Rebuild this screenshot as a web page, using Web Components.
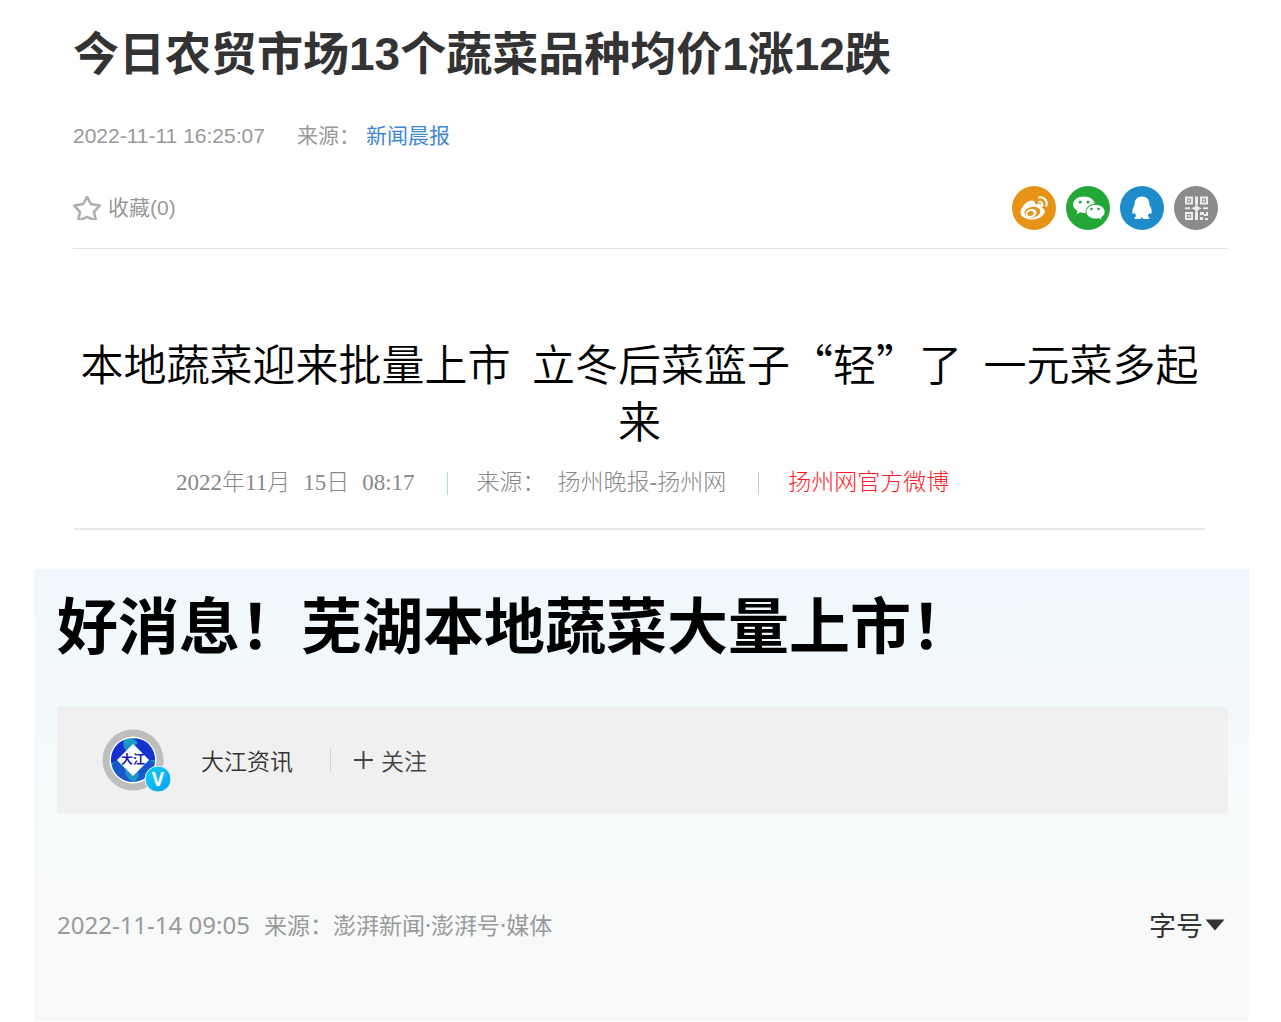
<!DOCTYPE html>
<html lang="zh-CN">
<head>
<meta charset="utf-8">
<meta name="viewport" content="width=device-width, initial-scale=1">
<title>蔬菜新闻</title>
<style>
body { margin: 0; background: #fff; font-family: "Liberation Sans", "Noto Sans CJK SC", sans-serif; }
</style>
</head>
<body>
<news-page>
  <price-article>
    <span slot="title">今日农贸市场13个蔬菜品种均价1涨12跌</span>
    <span slot="time">2022-11-11 16:25:07</span>
    <a slot="source" href="#source">新闻晨报</a>
  </price-article>
  <market-article>
    <span slot="title">本地蔬菜迎来批量上市&ensp;立冬后菜篮子“轻”了&ensp;一元菜多起来</span>
  </market-article>
  <wuhu-article>
    <span slot="title">好消息！芜湖本地蔬菜大量上市！</span>
    <author-bar slot="author" name="大江资讯"></author-bar>
  </wuhu-article>
</news-page>

<script>
const define = (name, html) => customElements.define(name, class extends HTMLElement {
  constructor() {
    super();
    this.attachShadow({ mode: 'open' }).innerHTML = html;
  }
  connectedCallback() {
    const label = this.shadowRoot.querySelector('[data-name]');
    if (label) label.textContent = this.getAttribute('name');
  }
});

define('news-page', `
<style>
  :host { display: block; }
  main { display: flex; flex-direction: column; }
</style>
<main><slot></slot></main>`);

define('favourite-button', `
<style>
  :host { display: block; }
  button { display: flex; align-items: center; gap: 6px; padding: 0; border: 0; background: none; color: #999; font: inherit; line-height: 30px; cursor: pointer; }
  svg { display: block; }
</style>
<button type="button">
  <svg width="29" height="24" viewBox="0 0 29 24" aria-hidden="true"><path d="M14 0.8 L17.8 8 L26.8 9.6 L21 15.8 L22.8 24.600 L14 21 L5.2 24.600 L7 15.800 L1.2 9.600 L10.2 8 Z" fill="none" stroke="#b0b0b0" stroke-width="2.600" stroke-linejoin="round"/></svg>
  <span>收藏(0)</span>
</button>`);

define('share-bar', `
<style>
  :host { display: flex; gap: 10px; }
  button { padding: 0; border: 0; background: none; cursor: pointer; }
  svg { display: block; }
</style>
<button type="button" aria-label="微博"><svg width="44" height="44" viewBox="0 0 44 44">
  <circle cx="22" cy="22" r="22" fill="#e79315"/>
  <path d="M8.5 27 C8.5 21 15 14.500 20 14.500 C23 14.500 23.500 17 22.800 18.500 C27 17 31 18 30 22 C33.500 23 33.500 26 31.500 28.500 C28 33 21 34.500 15.500 33 C11 31.600 8.500 29.500 8.500 27Z" fill="#fff"/>
  <ellipse cx="20.500" cy="26.200" rx="8" ry="5.300" fill="#e79315" transform="rotate(-8 20 26.500)"/>
  <ellipse cx="19" cy="27.200" rx="5.600" ry="4.200" fill="#fff" transform="rotate(-15 19 27)"/>
  <ellipse cx="18.500" cy="27.500" rx="3.200" ry="2.300" fill="#e79315" transform="rotate(-15 18.500 27.500)"/>
  <path d="M27 11.500 C32 10.500 36 15 34.300 20 M27 15.800 C29.500 15.300 31.200 17.500 30.300 20" fill="none" stroke="#fff" stroke-width="2" stroke-linecap="round"/>
</svg></button>
<button type="button" aria-label="微信"><svg width="44" height="44" viewBox="0 0 44 44">
  <circle cx="22" cy="22" r="22" fill="#23a837"/>
  <path d="M18 10.500 C24 10.500 28.500 14 28.800 18.200 C23 18 19.500 21.500 20.500 26.800 C18.500 27.300 16 27 14 26.300 L10.500 28.300 L11.500 25 C8.500 23 7 21 7 18.800 C7 14 12 10.500 18 10.500Z" fill="#fff"/>
  <path d="M29.500 18.500 C34.500 18.500 39 21.500 39 26 C39 28.300 37.700 30 35.400 31.500 L36 34 L32.800 32.600 C27 34 20 31 20 26 C20 21.500 24.500 18.500 29.500 18.500Z" fill="#fff" stroke="#23a837" stroke-width="0.800"/>
  <g fill="#23a837"><circle cx="14.200" cy="16" r="1.600"/><circle cx="22" cy="16" r="1.600"/><circle cx="25.500" cy="23" r="1.300"/><circle cx="32.500" cy="23" r="1.300"/></g>
</svg></button>
<button type="button" aria-label="QQ"><svg width="44" height="44" viewBox="0 0 44 44">
  <circle cx="22" cy="22" r="22" fill="#1e8bcd"/>
  <path d="M22 10.500 C27.500 10.500 29.500 14.500 29.500 19 C31.500 22.500 32.300 25.500 31.300 27.800 C30.700 28.200 30 27.500 29.300 26.800 C29 28.300 28.200 29.300 27.500 30 C30 31 30 33 28 33 L23.500 33 C22.800 32.500 22.500 31.800 22 31 C21.500 31.800 21.200 32.500 20.500 33 L16 33 C14 33 14 31 16.500 30 C15.800 29.300 15 28.300 14.700 26.800 C14 27.500 13.300 28.200 12.700 27.800 C11.700 25.500 12.500 22.500 14.500 19 C14.500 14.500 16.500 10.500 22 10.500Z" fill="#fff"/>
</svg></button>
<button type="button" aria-label="二维码"><svg width="44" height="44" viewBox="0 0 44 44">
  <circle cx="22" cy="22" r="22" fill="#8b8b8b"/>
  <g fill="none" stroke="#ececec" stroke-width="2"><path d="M12 11.500h6v6h-6z M27 11.500h6v6h-6z M12 27h6v6h-6z"/></g>
  <g fill="#ececec"><path d="M14 13.500h2v2h-2z M29 13.500h2v2h-2z M14 29h2v2h-2z M21 10.500h3v8h-3z M21 26h3v8h-3z M11 21.300h5v2h-5z M29 21.300h5v2h-5z M22.500 17l1.600 3.700l3.700 1.600l-3.700 1.600l-1.600 3.700l-1.600-3.700l-3.700-1.600l3.700-1.600z M26 26h4v3h-4z M32 26h2v4h-4v-2h2z M26 31h3v3h-3z M31 32h3v2h-3z"/></g>
</svg></button>`);

define('price-article', `
<style>
  :host { display: block; padding: 24px 53px 0 73px; font-size: 21px; color: #999; }
  h1 { margin: 0 0 37px; font-size: 46px; line-height: 60px; font-weight: 700; color: #333; }
  .meta { display: flex; flex-wrap: wrap; gap: 6px; line-height: 30px; margin-bottom: 35px; }
  .time { margin-right: 26px; }
  ::slotted(a) { color: #3c87d6; text-decoration: none; }
  .actions { display: flex; justify-content: space-between; align-items: center; padding: 0 10px 18px 0; border-bottom: 1px solid #e2e2e2; }
</style>
<article>
  <h1><slot name="title"></slot></h1>
  <div class="meta"><span class="time"><slot name="time"></slot></span><span>来源：</span><slot name="source"></slot></div>
  <div class="actions"><favourite-button></favourite-button><share-bar></share-bar></div>
</article>`);

define('market-article', `
<style>
  :host { display: block; padding: 85px 76px 0 74px; }
  h2 { margin: 0 0 20px; text-align: center; font: 350 43px/57px "Noto Sans CJK SC", sans-serif; color: #000; }
  .meta { display: flex; flex-wrap: wrap; align-items: center; padding: 0 0 30px 102px; border-bottom: 2px solid #e8e8e8; font: 300 23px/30px "Liberation Serif", "Noto Sans CJK SC", serif; color: #888; }
  .date { display: flex; gap: 13px; }
  i { width: 1px; height: 23px; margin: 0 29px 0 32px; background: #b9d8d8; }
  .source { display: flex; gap: 12px; }
  a { color: #ff1a2b; text-decoration: none; }
</style>
<article>
  <h2><slot name="title"></slot></h2>
  <div class="meta">
    <span class="date"><span>2022年11月</span><span>15日</span><span>08:17</span></span><i></i>
    <span class="source"><span>来源：</span><span>扬州晚报-扬州网</span></span><i></i>
    <a href="#weibo">扬州网官方微博</a>
  </div>
</article>`);

define('author-bar', `
<style>
  :host { display: flex; align-items: center; min-height: 106px; padding-left: 45px; background: #f0f0f0; font: 350 23px/34px "Noto Sans CJK SC", sans-serif; color: #333; }
  svg { display: block; }
  .name { margin-left: 29px; }
  i { width: 1px; height: 24px; margin: 0 23px 0 37px; background: #d4d4d4; }
  button { display: flex; align-items: center; gap: 8px; padding: 0; border: 0; background: none; font: inherit; color: #444; cursor: pointer; }
  .seal { font: 700 12px "Noto Sans CJK SC", sans-serif; fill: #1720b8; }
  .mark { font: 700 19px "Open Sans", sans-serif; fill: #fff; }
</style>
<svg width="70" height="66" viewBox="0 0 70 66" role="img" aria-label="大江资讯头像">
  <defs>
    <linearGradient id="sea" x1="0" y1="0" x2="0" y2="1"><stop offset="0" stop-color="#1b9cc4"/><stop offset="0.500" stop-color="#1b86c8"/><stop offset="1" stop-color="#1b9cc4"/></linearGradient>
    <linearGradient id="badge" x1="0" y1="0" x2="1" y2="1"><stop offset="0" stop-color="#10d0fa"/><stop offset="1" stop-color="#0aa0f0"/></linearGradient>
  </defs>
  <circle cx="31" cy="33" r="30.500" fill="#bebebe"/>
  <circle cx="31" cy="33" r="23.500" fill="#fff"/>
  <circle cx="31" cy="33" r="22" fill="url(#sea)"/>
  <path d="M9.200 36 C8 25 14 16 22 13 C20 19 23 24 25 24 L15 34Z M31 12 C43 10 53 20 53 33 L47 33 L33 18 C37 17 36 14 31 12Z" fill="#1420d0" opacity="0.850"/>
  <path d="M10 38 C13 50 22 55 31 55 C26 52 23 48 23 42 L15 34Z M47 33 L36 44 C38 49 36 53 31 55 C43 54 51 46 53 36Z" fill="#1838cc" opacity="0.650"/>
  <path d="M31 17 L47 33 L31 49 L15 33Z" fill="#fff"/>
  <text class="seal" x="31" y="37" text-anchor="middle">大江</text>
  <circle cx="56" cy="52" r="13" fill="url(#badge)" stroke="#f0f0f0" stroke-width="1"/>
  <text class="mark" x="56" y="59" text-anchor="middle">V</text>
</svg>
<span class="name" data-name></span><i></i>
<button type="button"><svg width="19" height="20" viewBox="0 0 19 20" aria-hidden="true"><path d="M9.500 1v18M0 10h19" stroke="#444" stroke-width="2"/></svg><span>关注</span></button>`);

define('font-size-select', `
<style>
  :host { display: flex; align-items: center; gap: 2px; color: #333; }
  select { appearance: none; margin: 0; padding: 0; border: 0; background: none; font: 27px/40px "Noto Sans CJK SC", sans-serif; color: inherit; cursor: pointer; }
  svg { display: block; pointer-events: none; }
</style>
<select aria-label="字号"><option>字号</option></select>
<svg width="20" height="12" viewBox="0 0 20 12" aria-hidden="true"><path d="M0.500 0.500h19L10 11.500Z" fill="#333"/></svg>`);

define('wuhu-article', `
<style>
  :host { display: block; margin: 39px 32px 0 34px; padding: 19px 21px 76px 23px; background: linear-gradient(#f0f8fd, #f8faf9 75%); }
  h2 { margin: 0 0 39px; font-size: 61px; line-height: 80px; font-weight: 700; color: #000; }
  footer { display: flex; justify-content: space-between; align-items: center; margin-top: 92px; padding-right: 3px; }
  .meta { display: flex; gap: 14px; font: 23px/40px "Noto Sans", "Noto Sans CJK SC", sans-serif; color: #999; }
  .time { font-size: 24px; }
</style>
<article>
  <h2><slot name="title"></slot></h2>
  <slot name="author"></slot>
  <footer>
    <div class="meta"><span class="time">2022-11-14 09:05</span><span>来源：澎湃新闻·澎湃号·媒体</span></div>
    <font-size-select></font-size-select>
  </footer>
</article>`);
</script>
</body>
</html>
